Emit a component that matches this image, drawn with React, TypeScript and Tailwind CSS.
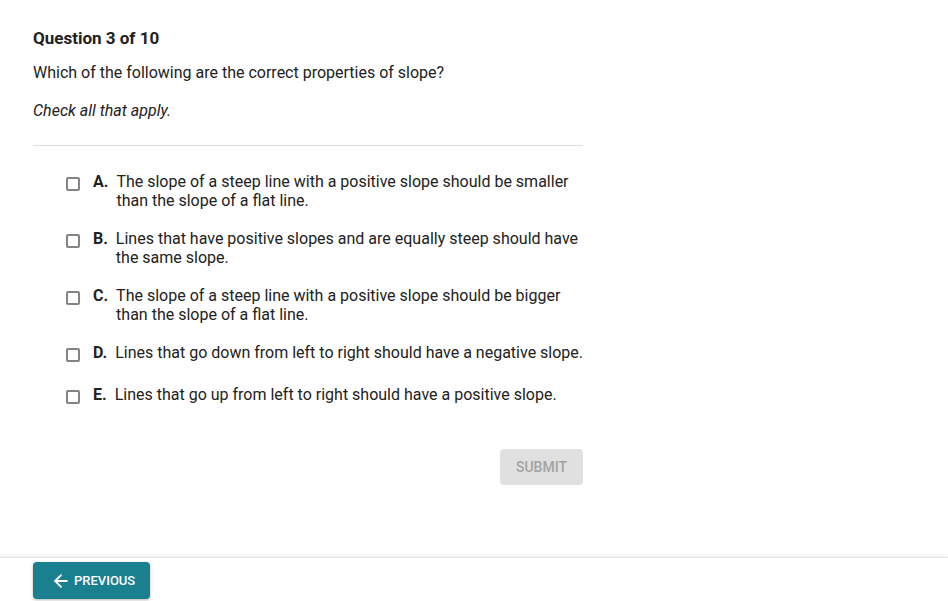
import { ArrowLeft } from 'lucide-react';

// ===========================================
// Quiz question page
// ===========================================

interface Option {
  letter: string;
  text: string;
}

const options: Option[] = [
  { letter: 'A.', text: 'The slope of a steep line with a positive slope should be smaller than the slope of a flat line.' },
  { letter: 'B.', text: 'Lines that have positive slopes and are equally steep should have the same slope.' },
  { letter: 'C.', text: 'The slope of a steep line with a positive slope should be bigger than the slope of a flat line.' },
  { letter: 'D.', text: 'Lines that go down from left to right should have a negative slope.' },
  { letter: 'E.', text: 'Lines that go up from left to right should have a positive slope.' },
];

function OptionRow({ letter, text }: Option) {
  return (
    <label className="flex items-start min-h-[23px] cursor-pointer">
      <span className="mt-[5px] w-[14px] h-[14px] shrink-0 border-2 border-[#848484] rounded-[2px] bg-white" />
      <span className="ml-[13px] font-bold shrink-0">{letter}</span>
      <span className="ml-[8px]">{text}</span>
    </label>
  );
}

export default function App() {
  return (
    <div
      className="h-screen flex flex-col bg-white text-[#222222]"
      style={{ fontFamily: 'Roboto, "Liberation Sans", sans-serif' }}
    >
      <main className="flex-1 px-[33px] pt-[26px]">
        <div className="w-[550px]">
          <h1 className="text-[17px] leading-[24px] font-bold">Question 3 of 10</h1>
          <p className="mt-[13px] text-[16px] leading-[20px]">
            Which of the following are the correct properties of slope?
          </p>
          <p className="mt-[18px] text-[16px] leading-[20px] italic">Check all that apply.</p>
          <div className="mt-[24px] h-px bg-[#dcdcdc]" />

          {/* Answer options */}
          <div className="mt-[26px] pl-[33px] -mr-[6px] flex flex-col gap-[19px] text-[16px] leading-[19px]">
            {options.map((o) => (
              <OptionRow key={o.letter} {...o} />
            ))}
          </div>

          <div className="mt-[41px] flex justify-end">
            <button
              disabled
              className="w-[83px] h-[36px] rounded-[4px] bg-[#e0e0e0] text-[#a3a3a3] text-[14px] font-medium uppercase"
            >
              Submit
            </button>
          </div>
        </div>
      </main>

      {/* Footer nav */}
      <footer className="h-[44px] border-t border-[#e6e6e6] shadow-[0_-2px_4px_rgba(0,0,0,0.06)] px-[33px] pt-[4px]">
        <button className="h-[37px] w-[117px] flex items-center pl-[18px] gap-[3px] rounded-[4px] bg-[#1a7f8f] text-white text-[13px] font-medium uppercase shadow-[0_1px_3px_rgba(0,0,0,0.3)]">
          <ArrowLeft className="w-[20px] h-[20px]" strokeWidth={2.25} />
          Previous
        </button>
      </footer>
    </div>
  );
}
